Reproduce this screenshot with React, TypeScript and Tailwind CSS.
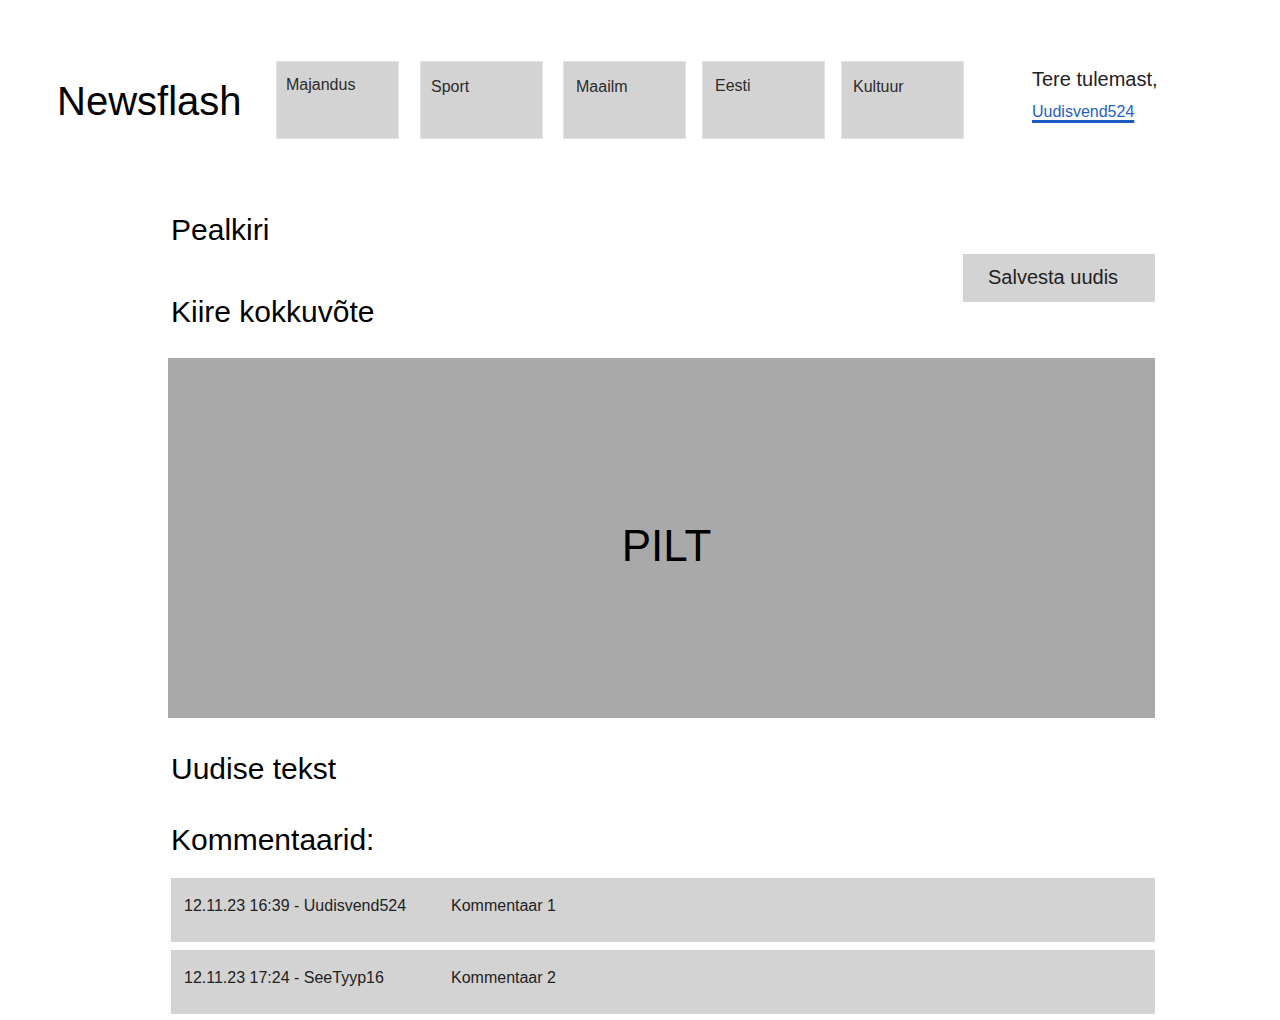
const navItems = [
  { label: "Majandus", cls: "pl-[9px] pt-[14px]" },
  { label: "Sport", cls: "ml-[21px] pl-[10px] pt-[16px]" },
  { label: "Maailm", cls: "ml-[20px] pl-[12px] pt-[16px]" },
  { label: "Eesti", cls: "ml-[16px] pl-[12px] pt-[15px]" },
  { label: "Kultuur", cls: "ml-[16px] pl-[11px] pt-[16px]" },
];

const comments = [
  { meta: "12.11.23 16:39 - Uudisvend524", text: "Kommentaar 1" },
  { meta: "12.11.23 17:24 - SeeTyyp16", text: "Kommentaar 2" },
];

export default function App() {
  return (
    <div className="min-h-[1020px] w-[1280px] bg-white font-['Liberation_Sans',Arial,sans-serif] text-black">
      {/* header */}
      <header className="flex items-start pt-[61px] pl-[57px]">
        <h1 className="mt-[17px] w-[219px] text-[40px] leading-[46px]">Newsflash</h1>
        <nav className="flex">
          {navItems.map((item) => (
            <a
              key={item.label}
              href="#"
              className={`block h-[78px] w-[123px] border border-[#e2e2e2] bg-[#d3d3d3] text-[16px] leading-[18px] text-[#2b2b2b] ${item.cls}`}
            >
              {item.label}
            </a>
          ))}
        </nav>
        <div className="ml-[68px] mt-[7px] flex flex-col">
          <span className="text-[20px] leading-[23px] text-[#222]">Tere tulemast,</span>
          <a
            href="#"
            className="mt-[12px] self-start text-[16px] leading-[18px] text-[#1f5fc4] underline decoration-[#1a5cc4] decoration-[3px] underline-offset-[3px]"
          >
            Uudisvend524
          </a>
        </div>
      </header>

      {/* article */}
      <main className="ml-[171px] w-[984px] pb-[6px]">
        <div className="mt-[74px] flex justify-between">
          <div className="flex flex-col">
            <h2 className="text-[30px] leading-[34px]">Pealkiri</h2>
            <p className="mt-[48px] text-[30px] leading-[34px]">Kiire kokkuvõte</p>
          </div>
          <button className="mt-[41px] flex h-[48px] w-[192px] items-center bg-[#d3d3d3] pb-[2px] pl-[25px] text-[20px] text-[#222]">
            Salvesta uudis
          </button>
        </div>

        <div className="-ml-[3px] mt-[29px] flex h-[360px] w-[987px] items-center justify-center bg-[#a9a9a9] pl-[10px] pt-[15px] text-[44px]">
          PILT
        </div>

        <h3 className="mt-[34px] text-[30px] leading-[34px]">Uudise tekst</h3>
        <h3 className="mt-[37px] text-[30px] leading-[34px]">Kommentaarid:</h3>

        <div className="mt-[21px] flex flex-col gap-[8px]">
          {comments.map((c) => (
            <div key={c.meta} className="flex h-[64px] bg-[#d3d3d3] pl-[13px] pt-[19px] text-[16px] leading-[18px] text-[#222]">
              <span className="w-[267px]">{c.meta}</span>
              <span>{c.text}</span>
            </div>
          ))}
        </div>
      </main>
    </div>
  );
}
